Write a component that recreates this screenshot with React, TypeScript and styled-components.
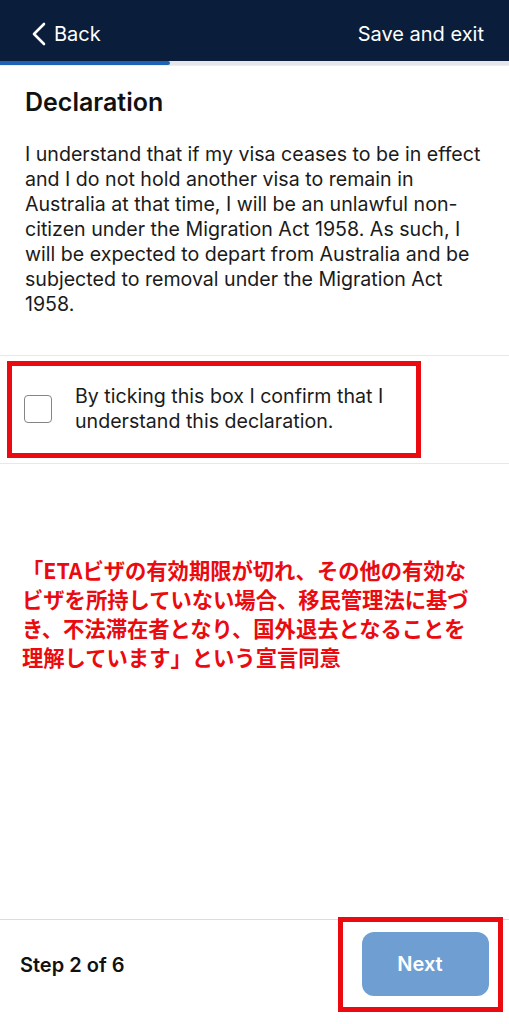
import React, { useState } from 'react';
import styled, { createGlobalStyle } from 'styled-components';

const GlobalStyle = createGlobalStyle`
	html, body {
		margin: 0;
		padding: 0;
		background: #ffffff;
	}
	body {
		font-family: Inter, 'Liberation Sans', Arial, 'Noto Sans CJK JP', sans-serif;
		color: #1b1b1b;
	}
	* {
		box-sizing: border-box;
	}
`;

function App() {
	const [checked, setChecked] = useState(false);

	return (
		<>
			<GlobalStyle />
			<View.Page>
				<View.Header>
					<View.BackButton>
						<svg width="16" height="24" viewBox="0 0 16 24" fill="none">
							<path
								d="M13 2 L3 12 L13 22"
								stroke="#ffffff"
								strokeWidth="2.6"
								strokeLinecap="round"
								strokeLinejoin="round"
							/>
						</svg>
						<Text.HeaderLink>Back</Text.HeaderLink>
					</View.BackButton>
					<Text.HeaderLink>Save and exit</Text.HeaderLink>
				</View.Header>
				<View.Progress>
					<View.ProgressFill style={{ width: `${(2 / 6) * 100}%` }} />
				</View.Progress>

				<View.Content>
					<Text.Title>Declaration</Text.Title>
					<Text.Body>
						I understand that if my visa ceases to be in effect and I do not hold
						another visa to remain in Australia at that time, I will be an
						unlawful non-citizen under the Migration Act 1958. As such, I will be
						expected to depart from Australia and be subjected to removal under
						the Migration Act 1958.
					</Text.Body>
				</View.Content>

				<View.CheckSection>
					<View.RedFrame>
						<View.CheckRow onClick={() => setChecked(!checked)}>
							<View.CheckBox checked={checked} />
							<Text.CheckLabel>
								By ticking this box I confirm that I understand this declaration.
							</Text.CheckLabel>
						</View.CheckRow>
					</View.RedFrame>
				</View.CheckSection>

				<Text.Note>
					「ETAビザの有効期限が切れ、その他の有効な
					<br />
					ビザを所持していない場合、移民管理法に基づ
					<br />
					き、不法滞在者となり、国外退去となることを
					<br />
					理解しています」という宣言同意
				</Text.Note>

				<View.Footer>
					<Text.Step>Step 2 of 6</Text.Step>
					<View.ButtonFrame>
						<View.NextButton>Next</View.NextButton>
					</View.ButtonFrame>
				</View.Footer>
			</View.Page>
		</>
	);
}

export default App;

const View = {
	Page: styled.div`
		width: 509px;
		min-height: 1024px;
		display: flex;
		flex-direction: column;
		background: #ffffff;
	`,
	Header: styled.div`
		height: 61px;
		background-color: #0a1e3b;
		display: flex;
		align-items: center;
		justify-content: space-between;
		padding: 6px 25px 0 31px;
	`,
	BackButton: styled.div`
		display: flex;
		align-items: center;
		gap: 7px;
		cursor: pointer;
	`,
	Progress: styled.div`
		height: 5px;
		background-color: #e4e6e9;
		border-bottom: 1px solid #eeeeee;
	`,
	ProgressFill: styled.div`
		height: 100%;
		background-color: #1e62b6;
		border-radius: 0 3px 3px 0;
	`,
	Content: styled.div`
		padding: 20px 25px 38px 25px;
	`,
	CheckSection: styled.div`
		border-top: 1px solid #e8e8e8;
		border-bottom: 1px solid #e8e8e8;
		padding: 5px 0 5px 7px;
	`,
	RedFrame: styled.div`
		width: 414px;
		border: 5px solid #ea0a0f;
		padding: 18px 0 19px 12px;
	`,
	CheckRow: styled.div`
		display: flex;
		align-items: center;
		gap: 23px;
		cursor: pointer;
	`,
	CheckBox: styled.div<{ checked: boolean }>`
		flex: none;
		width: 28px;
		height: 28px;
		border: 1.2px solid #858585;
		border-radius: 4px;
		background-color: ${(props) => (props.checked ? '#1e62b6' : '#ffffff')};
	`,
	Footer: styled.div`
		margin-top: auto;
		height: 105px;
		border-top: 1px solid #dcdcdc;
		display: flex;
		align-items: flex-start;
		justify-content: space-between;
		padding: 0 6px 0 20px;
	`,
	ButtonFrame: styled.div`
		margin-top: -3px;
		border: 5px solid #ea0a0f;
		padding: 10px 9px 11px 19px;
	`,
	NextButton: styled.button`
		width: 127px;
		height: 64px;
		border: none;
		border-radius: 12px;
		padding: 0 11px 0 0;
		background-color: #6f9fd2;
		color: #ffffff;
		font-family: Inter, 'Liberation Sans', Arial, sans-serif;
		font-size: 20px;
		font-weight: 600;
		cursor: pointer;
	`,
};

const Text = {
	HeaderLink: styled.span`
		font-size: 20px;
		color: #ffffff;
		cursor: pointer;
	`,
	Title: styled.h1`
		margin: 0 0 24px 0;
		font-size: 25px;
		font-weight: 600;
		color: #111111;
		line-height: 32px;
	`,
	Body: styled.p`
		margin: 0;
		font-size: 19.6px;
		line-height: 25px;
		color: #1b1b1b;
	`,
	CheckLabel: styled.span`
		font-size: 19.6px;
		line-height: 25px;
		color: #1b1b1b;
	`,
	Note: styled.p`
		margin: 91px 0 0 0;
		padding-left: 22px;
		font-family: 'Noto Sans CJK JP', sans-serif;
		font-size: 21.3px;
		font-weight: bold;
		line-height: 29px;
		color: #ea0a0f;
	`,
	Step: styled.span`
		margin-top: 33px;
		font-size: 20px;
		font-weight: 600;
		color: #111111;
	`,
};
